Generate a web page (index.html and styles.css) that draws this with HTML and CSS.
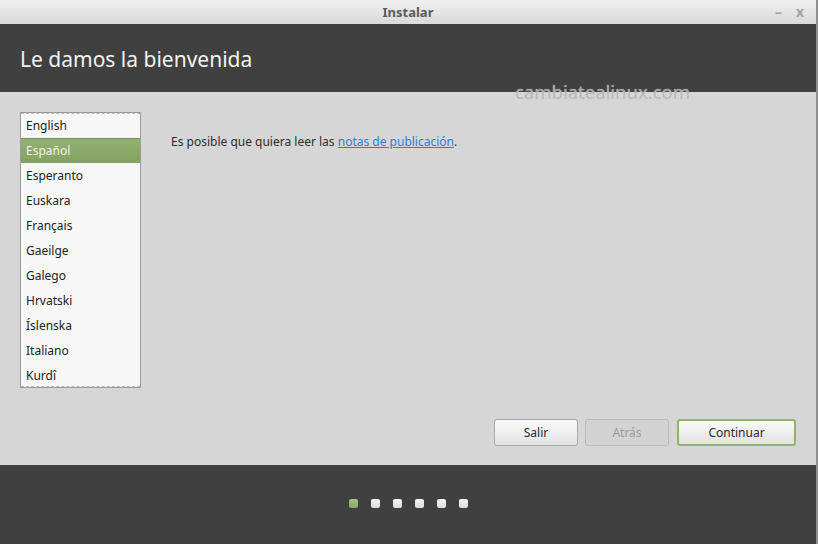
FILE: index.html
```html
<!DOCTYPE html>
<html lang="es">
<head>
  <meta charset="UTF-8" />
  <title>Instalar</title>
  <link rel="stylesheet" href="styles.css">
</head>
<body>
  <div class="window">
    <div class="titlebar">
      <span class="title">Instalar</span>
      <div class="wm-buttons">
        <span class="wm-min">&ndash;</span>
        <span class="wm-close">x</span>
      </div>
    </div>

    <div class="header">
      <h1>Le damos la bienvenida</h1>
    </div>

    <div class="watermark">cambiatealinux.com</div>

    <div class="content">
      <div class="main">
        <ul class="lang-list">
          <li>English</li>
          <li class="selected">Español</li>
          <li>Esperanto</li>
          <li>Euskara</li>
          <li>Français</li>
          <li>Gaeilge</li>
          <li>Galego</li>
          <li>Hrvatski</li>
          <li>Íslenska</li>
          <li>Italiano</li>
          <li>Kurdî</li>
        </ul>
        <p class="notes">Es posible que quiera leer las <a href="#">notas de publicación</a>.</p>
      </div>

      <div class="actions">
        <button class="btn">Salir</button>
        <button class="btn" disabled>Atrás</button>
        <button class="btn btn-next">Continuar</button>
      </div>
    </div>

    <div class="footer">
      <span class="dot active"></span>
      <span class="dot"></span>
      <span class="dot"></span>
      <span class="dot"></span>
      <span class="dot"></span>
      <span class="dot"></span>
    </div>
  </div>
</body>
</html>
```

FILE: styles.css
```css
html, body {
  margin: 0;
  padding: 0;
}

body {
  font-family: "Noto Sans", "Open Sans", sans-serif;
  font-size: 12px;
  color: #333;
  background: #d6d6d6;
}

.window {
  position: relative;
  width: 816px;
  height: 544px;
  border-right: 2px solid #8e8e8e;
  display: flex;
  flex-direction: column;
}

.titlebar {
  height: 24px;
  background: linear-gradient(#efefef, #dadada);
  display: flex;
  align-items: center;
  justify-content: center;
  position: relative;
}

.title {
  font-weight: bold;
  color: #5b5b5b;
  font-size: 13px;
}

.wm-buttons {
  position: absolute;
  right: 12px;
  top: 2px;
  display: flex;
  gap: 14px;
  color: #a4a4a4;
  font-size: 14px;
  font-weight: bold;
}

.header {
  height: 68px;
  background: #404040;
  display: flex;
  align-items: center;
  padding-left: 20px;
}

.header h1 {
  margin: 0;
  font-weight: normal;
  font-size: 21px;
  color: #f2f2f2;
  padding-top: 1px;
}

.watermark {
  position: absolute;
  left: 515px;
  top: 79px;
  font-size: 18.5px;
  color: rgba(175, 175, 175, 0.85);
  text-shadow: 0 0 1px rgba(225, 225, 225, 0.7);
}

.content {
  height: 373px;
  background: #d6d6d6;
  box-sizing: border-box;
  padding: 20px 20px 19px 20px;
  display: flex;
  flex-direction: column;
  justify-content: space-between;
}

.main {
  display: flex;
  gap: 30px;
}

.lang-list {
  list-style: none;
  margin: 0;
  padding: 0;
  width: 119px;
  height: 274px;
  border: 1px solid #9a9a9a;
  background: #f7f7f7;
  position: relative;
}

.lang-list::before,
.lang-list::after {
  content: "";
  position: absolute;
  left: 0;
  right: 0;
  border-top: 1px dashed #b8b8b8;
}

.lang-list::before {
  top: 0;
}

.lang-list::after {
  bottom: 0;
}

.lang-list li {
  height: 25px;
  line-height: 24px;
  padding: 1px 0 0 5px;
  color: #222;
  box-sizing: border-box;
}

.lang-list li.selected {
  background: linear-gradient(#93b272, #84a262);
  border-top: 1px solid #7a8f63;
  padding-top: 0;
  color: #f0f4ea;
}

.notes {
  margin: 21px 0 0 0;
  color: #2e2e2e;
}

.notes a {
  color: #2f7ed8;
}

.actions {
  display: flex;
  justify-content: flex-end;
  gap: 7px;
}

.btn {
  font-family: inherit;
  font-size: 12px;
  width: 84px;
  height: 27px;
  border: 1px solid #a9a9a9;
  border-radius: 3px;
  background: linear-gradient(#fafafa, #e2e2e2);
  color: #2a2a2a;
  padding: 0;
}

.btn:disabled {
  background: #d3d3d3;
  border-color: #bcbcbc;
  color: #9a9a9a;
}

.btn-next {
  width: 119px;
  margin-left: 1px;
  border: 2px solid #8fb46a;
}

.footer {
  flex: 1;
  background: #404040;
  display: flex;
  justify-content: center;
  align-items: center;
  gap: 13px;
  padding-bottom: 2px;
}

.dot {
  width: 9px;
  height: 9px;
  border-radius: 2px;
  background: linear-gradient(#f6f6f6, #dcdcdc);
}

.dot.active {
  background: linear-gradient(#a3c47f, #86a963);
}
```
